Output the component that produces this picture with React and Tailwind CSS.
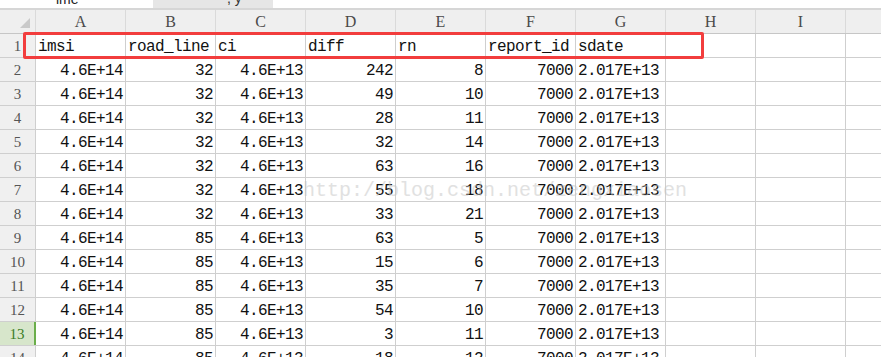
import React from "react";

const COLS = ["A", "B", "C", "D", "E", "F", "G", "H", "I"];

const header = ["imsi", "road_line", "ci", "diff", "rn", "report_id", "sdate"];

const data = [
  [32, 242, 8],
  [32, 49, 10],
  [32, 28, 11],
  [32, 32, 14],
  [32, 63, 16],
  [32, 55, 18],
  [32, 33, 21],
  [85, 63, 5],
  [85, 15, 6],
  [85, 35, 7],
  [85, 54, 10],
  [85, 3, 11],
  [85, 18, 12],
];

const mono = "font-['Liberation_Mono',monospace] text-[16px] tracking-[-0.6px] text-[#111]";

function Cell({ children, align = "right" }) {
  return (
    <div
      className={`w-[90px] shrink-0 h-full border-r border-[#cfcfcf] flex items-center pt-[2px] overflow-hidden whitespace-nowrap ${mono} ${
        align === "right" ? "justify-end pr-[2px]" : "justify-start pl-[2px]"
      }`}
    >
      {children}
    </div>
  );
}

function RowHead({ n, active }) {
  return (
    <div
      className={`w-[36px] shrink-0 h-full flex items-center justify-center pt-[1px] font-['Liberation_Serif',serif] text-[15px] ${
        active
          ? "bg-[#d7e6cb] text-[#3b7d1f] border-r-2 border-[#6aae4a]"
          : "bg-[#f0f0f0] text-[#555] border-r border-[#cfcfcf]"
      }`}
    >
      {n}
    </div>
  );
}

function Row({ n, children, active }) {
  return (
    <div className="flex h-[24px] border-b border-[#cfcfcf]">
      <RowHead n={n} active={active} />
      {children}
      <div className="flex-1 h-full" />
    </div>
  );
}

export default function App() {
  return (
    <div className="relative w-[881px] h-[357px] overflow-hidden bg-white">
      {/* tab strip */}
      <div className="flex h-[8px] overflow-hidden bg-white border-b-2 border-[#d6d6d6] box-content">
        <div className="w-[153px] bg-white overflow-hidden">
          <div className="ml-[56px] -mt-[11px] font-['Liberation_Sans',sans-serif] text-[14px] text-[#222]">
            ime
          </div>
        </div>
        <div className="w-[120px] bg-[#e6e6e6] overflow-hidden">
          <div className="ml-[74px] -mt-[12px] font-['Liberation_Sans',sans-serif] text-[14px] text-[#333]">
            , y
          </div>
        </div>
        <div className="flex-1" />
      </div>

      {/* column header */}
      <div className="flex h-[24px] bg-[#efefef] border-b border-[#c6c6c6]">
        <div className="w-[36px] shrink-0 h-full border-r border-[#dadada] flex items-end justify-end pr-[5px] pb-[5px]">
          <div className="w-0 h-0 border-l-[10px] border-l-transparent border-b-[10px] border-b-[#c9c9c9]" />
        </div>
        {COLS.map((c) => (
          <div
            key={c}
            className="w-[90px] shrink-0 h-full border-r border-[#dadada] flex items-center justify-center pt-[1px] font-['Liberation_Serif',serif] text-[16px] text-[#4a4a4a]"
          >
            {c}
          </div>
        ))}
        <div className="flex-1" />
      </div>

      {/* row 1 */}
      <Row n={1}>
        {header.map((h) => (
          <Cell key={h} align="left">
            {h}
          </Cell>
        ))}
        <Cell />
        <Cell />
      </Row>

      {data.map((r, i) => (
        <Row key={i} n={i + 2} active={i + 2 === 13}>
          <Cell>4.6E+14</Cell>
          <Cell>{r[0]}</Cell>
          <Cell>4.6E+13</Cell>
          <Cell>{r[1]}</Cell>
          <Cell>{r[2]}</Cell>
          <Cell>7000</Cell>
          <Cell align="left">2.017E+13</Cell>
          <Cell />
          <Cell />
        </Row>
      ))}

      {/* watermark */}
      <div className="absolute left-[303px] top-[179px] font-['Liberation_Mono',monospace] text-[20px] leading-[24px] text-[#c4c4c4] opacity-50 whitespace-nowrap pointer-events-none">
        http://blog.csdn.net/zengxiaosen
      </div>

      {/* red highlight box */}
      <div className="absolute left-[23px] top-[32px] w-[681px] h-[27px] border-[3px] border-[#f23d3d] rounded-[2px] pointer-events-none" />
    </div>
  );
}
